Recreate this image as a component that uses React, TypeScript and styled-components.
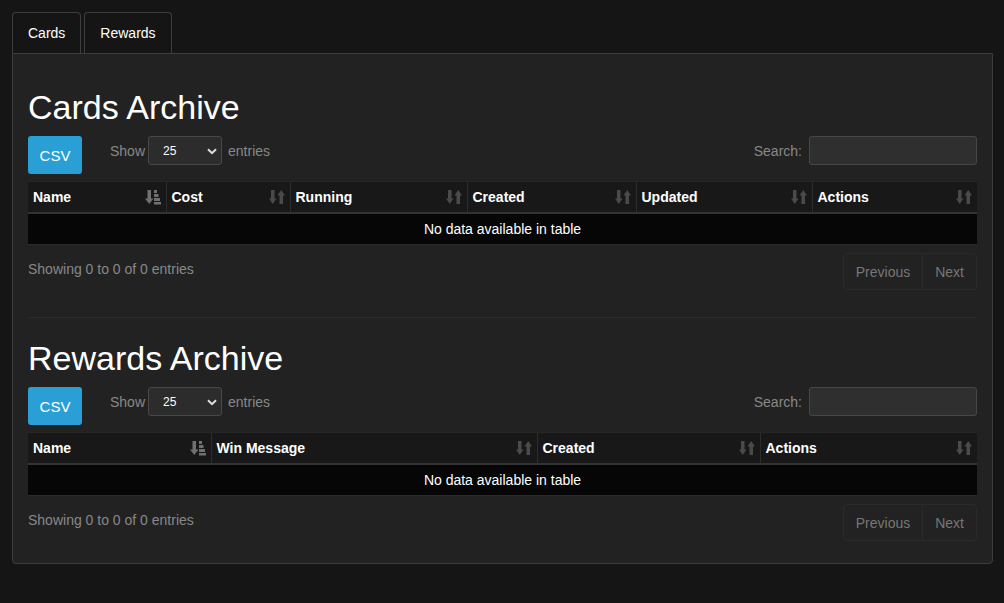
import styled, { createGlobalStyle } from "styled-components";

const GlobalStyle = createGlobalStyle`
  *, *::before, *::after {
    box-sizing: border-box;
  }

  html, body {
    margin: 0;
    padding: 0;
    background: #151515;
    color: #fff;
    font-family: "Liberation Sans", Arial, Helvetica, sans-serif;
    font-size: 14px;
    line-height: 20px;
  }
`;

const Page = styled.div`
  padding: 12px 11px 12px 12px;
`;

const TabList = styled.ul`
  display: flex;
  gap: 3px;
  list-style: none;
  margin: 0;
  padding: 0;
`;

const Tab = styled.li`
  padding: 10px 15px;
  border: 1px solid #3d3d3d;
  border-bottom: none;
  border-radius: 4px 4px 0 0;
  background: #151515;
  color: #fff;
  font-size: 14px;
  line-height: 20px;
  cursor: pointer;
`;

const Panel = styled.div`
  background: #222;
  border: 1px solid #3d3d3d;
  border-radius: 0 0 4px 4px;
  padding: 0 15px 22px;
`;

const Section = styled.section`
  display: flex;
  flex-direction: column;
`;

const Title = styled.h1<{ $first?: boolean }>`
  margin: ${(p) => (p.$first ? "33px" : "20px")} 0 9px;
  font-size: 34px;
  line-height: 40px;
  font-weight: 400;
  color: #fff;
`;

const Controls = styled.div`
  display: flex;
  align-items: flex-start;
  height: 38px;
`;

const CsvButton = styled.button`
  height: 38px;
  width: 54px;
  padding: 0;
  border: none;
  border-radius: 3px;
  background: #2a9fd6;
  color: #fff;
  font-family: inherit;
  font-size: 15px;
`;

const Label = styled.label`
  display: flex;
  align-items: center;
  color: #888;
  font-size: 14px;
  height: 29px;
`;

const LengthLabel = styled(Label)`
  margin-left: 28px;
`;

const SearchLabel = styled(Label)`
  margin-left: auto;
  gap: 7px;
`;

const SelectWrap = styled.span`
  position: relative;
  display: inline-flex;
  margin: 0 6px 0 3px;
`;

const Select = styled.select`
  appearance: none;
  width: 74px;
  height: 29px;
  padding: 0 0 0 14px;
  background: #2c2c2c;
  border: 1px solid #484848;
  border-radius: 3px;
  color: #fff;
  font-family: inherit;
  font-size: 12px;
`;

const Chevron = styled.svg`
  position: absolute;
  right: 5px;
  top: 12px;
  pointer-events: none;
`;

const SearchInput = styled.input`
  width: 168px;
  height: 29px;
  background: #2f2f2f;
  border: 1px solid #474747;
  border-radius: 3px;
  color: #fff;
`;

const Table = styled.table`
  margin-top: 7px;
  width: 100%;
  border-collapse: collapse;
  table-layout: fixed;
`;

const HeadCell = styled.th<{ $width: number }>`
  width: ${(p) => p.$width}px;
  height: 31px;
  padding: 0 5px 0 5px;
  text-align: left;
  font-weight: 700;
  font-size: 14px;
  color: #fff;
  background: #181818;
  border-top: 1px solid #262626;
  border-left: 1px solid #2c2c2c;
  border-bottom: 2px solid #333;
  &:first-child {
    border-left: none;
  }
`;

const HeadInner = styled.div`
  display: flex;
  align-items: center;
  justify-content: space-between;
`;

const EmptyCell = styled.td`
  height: 32px;
  background: #060606;
  text-align: center;
  color: #fff;
  font-size: 14px;
  border-bottom: 1px solid #2a2a2a;
`;

const Footer = styled.div`
  display: flex;
  justify-content: space-between;
  align-items: flex-start;
  margin-top: 8px;
`;

const Info = styled.div`
  color: #888;
  padding-top: 6px;
`;

const Pager = styled.div`
  display: flex;
  height: 37px;
  border: 1px solid #2a2a2a;
  border-radius: 4px;
`;

const PageButton = styled.span`
  display: flex;
  align-items: center;
  padding: 0 12px;
  color: #777;
  font-size: 14px;
  & + & {
    border-left: 1px solid #2a2a2a;
  }
`;

const Divider = styled.hr`
  margin: 27px 0 0;
  border: none;
  border-top: 1px solid #2c2c2c;
`;

function SortIcon({ active }: { active?: boolean }) {
  const fill = active ? "#707070" : "#4a4a4a";
  if (active) {
    return (
      <svg width="16" height="16" viewBox="0 0 16 16">
        <rect x="2.5" y="1" width="3.5" height="9" fill={fill} />
        <polygon points="0,9.5 8.5,9.5 4.25,15" fill={fill} />
        <rect x="9" y="1" width="3" height="3" fill={fill} />
        <rect x="9" y="5" width="4.5" height="3" fill={fill} />
        <rect x="9" y="9" width="6" height="3" fill={fill} />
        <rect x="9" y="13" width="7" height="2.5" fill={fill} />
      </svg>
    );
  }
  return (
    <svg width="16" height="16" viewBox="0 0 16 16">
      <rect x="2" y="1" width="3.5" height="9" fill={fill} />
      <polygon points="0,9.5 7.5,9.5 3.75,15" fill={fill} />
      <rect x="10.5" y="6" width="3.5" height="9" fill={fill} />
      <polygon points="8.5,6.5 16,6.5 12.25,1" fill={fill} />
    </svg>
  );
}

type Column = { name: string; width: number };

function Archive({ title, columns, first }: { title: string; columns: Column[]; first?: boolean }) {
  return (
    <Section>
      <Title $first={first}>{title}</Title>
      <Controls>
        <CsvButton>CSV</CsvButton>
        <LengthLabel>
          Show
          <SelectWrap>
            <Select defaultValue="25">
              <option>10</option>
              <option>25</option>
              <option>50</option>
              <option>100</option>
            </Select>
            <Chevron width="10" height="7" viewBox="0 0 10 7">
              <path d="M1 1.2 L5 5.2 L9 1.2" stroke="#ddd" strokeWidth="2" fill="none" />
            </Chevron>
          </SelectWrap>
          entries
        </LengthLabel>
        <SearchLabel>
          Search:
          <SearchInput type="search" />
        </SearchLabel>
      </Controls>
      <Table>
        <thead>
          <tr>
            {columns.map((c, i) => (
              <HeadCell key={c.name} $width={c.width}>
                <HeadInner>
                  {c.name}
                  <SortIcon active={i === 0} />
                </HeadInner>
              </HeadCell>
            ))}
          </tr>
        </thead>
        <tbody>
          <tr>
            <EmptyCell colSpan={columns.length}>No data available in table</EmptyCell>
          </tr>
        </tbody>
      </Table>
      <Footer>
        <Info>Showing 0 to 0 of 0 entries</Info>
        <Pager>
          <PageButton>Previous</PageButton>
          <PageButton>Next</PageButton>
        </Pager>
      </Footer>
    </Section>
  );
}

const cardColumns: Column[] = [
  { name: "Name", width: 138 },
  { name: "Cost", width: 124 },
  { name: "Running", width: 177 },
  { name: "Created", width: 169 },
  { name: "Updated", width: 176 },
  { name: "Actions", width: 165 },
];

const rewardColumns: Column[] = [
  { name: "Name", width: 183 },
  { name: "Win Message", width: 326 },
  { name: "Created", width: 223 },
  { name: "Actions", width: 217 },
];

export default function App() {
  return (
    <>
      <GlobalStyle />
      <Page>
        <TabList>
          <Tab>Cards</Tab>
          <Tab>Rewards</Tab>
        </TabList>
        <Panel>
          <Archive title="Cards Archive" columns={cardColumns} first />
          <Divider />
          <Archive title="Rewards Archive" columns={rewardColumns} />
        </Panel>
      </Page>
    </>
  );
}
